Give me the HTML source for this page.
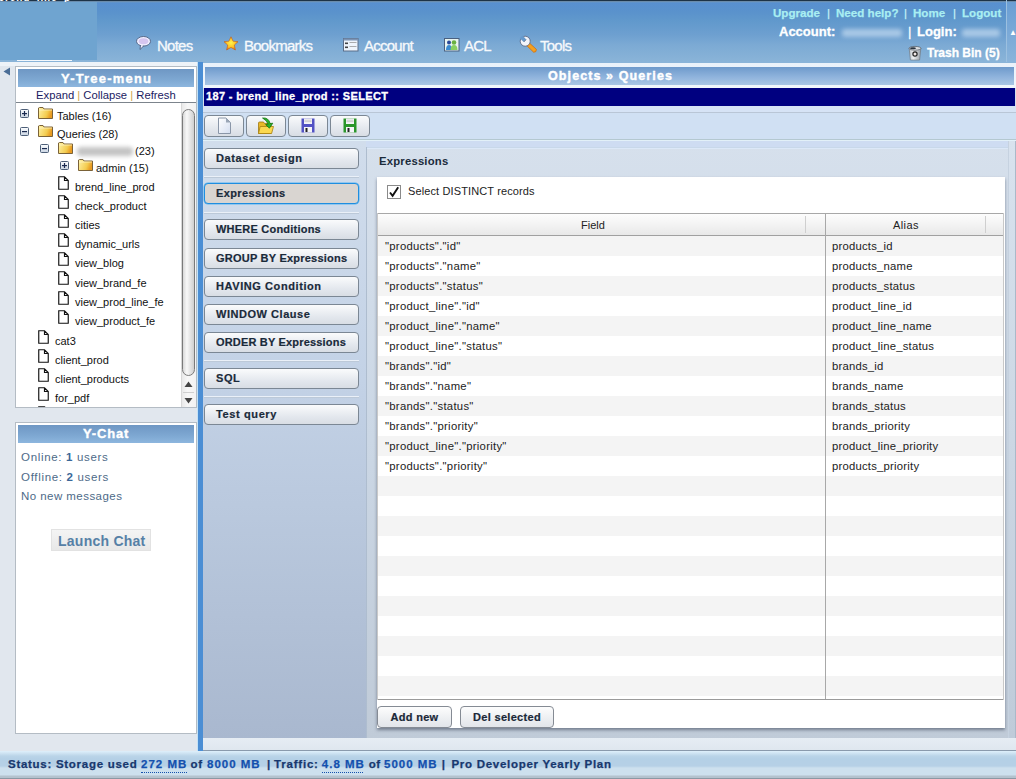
<!DOCTYPE html>
<html><head><meta charset="utf-8">
<style>
*{margin:0;padding:0;box-sizing:border-box}
html,body{width:1016px;height:779px;overflow:hidden;background:#dfe6ee;font-family:"Liberation Sans",sans-serif;position:relative}
.a{position:absolute}
.t{position:absolute;white-space:nowrap;line-height:1}
#hdr{left:0;top:0;width:1016px;height:63px;background:linear-gradient(#7a9cb8 1px,#5890d0 3px,#5a92cc 12px,#6098cc 20px,#6ea0d0 35px,#7caad4 45px,#8ab4d8 62px)}
#hdrtop{left:0;top:0;width:1016px;height:1px;background:#1d3048}
#logo{left:0;top:1px;width:97px;height:59px;background:#6fa4d0}
.nav{color:#f6f9fc;font-size:15px;top:38px;letter-spacing:-0.75px;-webkit-text-stroke:0.3px #f6f9fc}
.toplinks{color:#a9eef2;font-weight:bold;font-size:11.6px;top:6.5px;-webkit-text-stroke:0.25px #a9eef2}
.wb{color:#fff;font-weight:bold;-webkit-text-stroke:0.3px #fff}
#lcol{left:0;top:63px;width:198px;height:688px;background:#e2e8ef}
.box{background:#fff;border:1px solid #b4bcc4}
.boxhdr{background:linear-gradient(#6e97c4,#7ea8d2 60%,#8db6de);color:#fff;font-weight:bold;text-align:center}
#bluebar{left:198px;top:62px;width:5px;height:689px;background:#4b8ed4;box-shadow:-1px 0 0 #c4e2f6,1px 0 0 #c6dcf0}
#rpanel{left:203px;top:62px;width:813px;height:689px;background:#ccdaeb}
#status{left:0;top:751px;width:1016px;height:28px;background:linear-gradient(#dff0fb 0px,#bad4e8 5px,#b4d0e6 8px,#b6d0e6 15px,#cde0ee 17px,#cde0ee 24px,#b4c2ce 25px,#b4c2ce 27px,#8a98a4 27px)}
.tree{font-size:11px;color:#111}
.st{font-weight:bold;font-size:11.5px;-webkit-text-stroke:0.25px currentColor}
.chat{font-size:11.5px;color:#4d6a88;letter-spacing:0.45px}
.chat b{color:#3b6798}
.fold{width:15px;height:11px;background:linear-gradient(135deg,#fff6b0,#e8b020);border:1px solid #b08820;border-radius:1px}
.file{width:11px;height:14px;border:1px solid #222;background:#fff}
.pm{width:9px;height:9px;border:1px solid #6a7f95;background:linear-gradient(#fff,#dde4ec)}
.tab{-webkit-text-stroke:0.2px #1a2a3a;left:204px;width:155px;height:21px;border:1px solid #7b8794;border-radius:4px;background:linear-gradient(#fafbfc,#e4e8ee 60%,#d8dde4);font-weight:bold;font-size:11px;color:#1a2a3a;padding-left:11px;line-height:19px}
.tbtn{top:115px;width:40px;height:22px;border:1px solid #7b8794;border-radius:4px;background:linear-gradient(#fafbfc,#e4e8ee 60%,#d8dde4)}
.row{left:378px;width:626px;height:20px}
.cell{font-size:11.3px;color:#222}
.tab.sel{border:1px solid #1f8ee0;background:#d9d5d1;box-shadow:0 0 0 0.5px #5ab4f0}
.btn{-webkit-text-stroke:0.2px #1a2838;border:1px solid #858b94;border-radius:4px;background:linear-gradient(#fdfdfd,#eceef1 60%,#e2e5ea);font-weight:bold;font-size:11px;color:#1a2838;text-align:center;line-height:20px;letter-spacing:0.3px}
</style></head><body>
<div id="hdr" class="a"></div>

<div id="logo" class="a"></div>
<div class="a" style="left:0;top:0;width:1016px;height:2px;overflow:hidden;background:linear-gradient(#1d3347 1px,#6a8cac 1px)"><div class="t" style="left:-2px;top:-7.5px;color:#fff;font-size:10px;font-weight:bold;letter-spacing:0.9px">brend_line_p</div></div>
<div class="a" style="left:1006px;top:0;width:1px;height:62px;background:#9cc0e0"></div>
<div class="a" style="left:1007px;top:2px;width:9px;height:60px;background:linear-gradient(#6a9ed4,#8ab4da)"></div>
<div class="t" style="left:1009px;top:29px;color:#fff;font-size:8px">&#9650;</div>
<div class="a" style="left:17px;top:60px;width:55px;height:1px;background:#f4f8fc"></div>
<!-- nav icons -->
<svg class="a" style="left:136px;top:36px" width="16" height="15" viewBox="0 0 16 15">
 <ellipse cx="7.5" cy="5.3" rx="7" ry="4.8" fill="#f0eeff" stroke="#4d5f80" stroke-width="0.9"/>
 <path d="M4.5 9 L4 13.5 L8 9.6" fill="#f0eeff" stroke="#4d5f80" stroke-width="0.9"/>
 <ellipse cx="7.5" cy="5.3" rx="4.8" ry="3" fill="#d6c6f0"/>
</svg>
<div class="t nav" style="left:157px">Notes</div>
<svg class="a" style="left:223px;top:36px" width="16" height="15" viewBox="0 0 16 15">
 <defs><radialGradient id="sg" cx="50%" cy="45%" r="60%"><stop offset="0" stop-color="#fff650"/><stop offset="0.6" stop-color="#ffc020"/><stop offset="1" stop-color="#e06010"/></radialGradient></defs>
 <path d="M8 0.8 L10.1 5.2 L15 5.7 L11.3 9 L12.4 14 L8 11.4 L3.6 14 L4.7 9 L1 5.7 L5.9 5.2 Z" fill="url(#sg)" stroke="#c85a10" stroke-width="0.6"/>
</svg>
<div class="t nav" style="left:244px">Bookmarks</div>
<svg class="a" style="left:343px;top:38px" width="16" height="14" viewBox="0 0 16 14">
 <rect x="0.5" y="0.5" width="14.5" height="12.5" fill="#eef4fc" stroke="#5b6e8a"/>
 <rect x="0.5" y="0.5" width="14.5" height="2" fill="#7d94b4"/>
 <rect x="2" y="4.5" width="3" height="1.6" fill="#444"/><rect x="6.5" y="4" width="7" height="0.8" fill="#999"/>
 <rect x="2" y="8.5" width="3" height="1.6" fill="#444"/><rect x="6.5" y="8" width="7" height="0.8" fill="#999"/>
</svg>
<div class="t nav" style="left:364px">Account</div>
<svg class="a" style="left:444px;top:38px" width="16" height="14" viewBox="0 0 16 14">
 <rect x="0.5" y="0.5" width="14.5" height="12.5" fill="#e8f4f0" stroke="#4a6080"/>
 <circle cx="5" cy="4.5" r="2" fill="#2a4a9a"/><path d="M2 12 Q2 7 5 7 Q8 7 8 12Z" fill="#3a8ad0"/>
 <circle cx="10" cy="4.5" r="2.3" fill="#6ab040"/><path d="M6.5 12 Q6.5 7 10 7 Q13.5 7 13.5 12Z" fill="#8ad060"/>
</svg>
<div class="t nav" style="left:464px">ACL</div>
<svg class="a" style="left:519px;top:35px" width="18" height="18" viewBox="0 0 18 18">
 <path d="M10.2 7.8 L17.4 14.4 Q17.6 17.4 14.6 17.2 L7.6 10.4 Z" fill="#f5a020" stroke="#c8680c" stroke-width="0.7"/>
 <circle cx="6.2" cy="6.2" r="5" fill="#f2f4fa" stroke="#55607a" stroke-width="0.8"/>
 <path d="M0.6 3.2 L3.6 0.4 L7.2 4.6 L4.8 7 Z" fill="#6699cc"/>
 <path d="M4.8 7 L7.2 4.6" stroke="#55607a" stroke-width="0.7"/>
</svg>
<div class="t nav" style="left:540px">Tools</div>
<!-- top links -->
<div class="t toplinks" style="left:773px">Upgrade</div>
<div class="t toplinks" style="left:827px;font-weight:normal;color:#d8f0f8">|</div>
<div class="t toplinks" style="left:836px">Need help?</div>
<div class="t toplinks" style="left:904px;font-weight:normal;color:#d8f0f8">|</div>
<div class="t toplinks" style="left:913px">Home</div>
<div class="t toplinks" style="left:953px;font-weight:normal;color:#d8f0f8">|</div>
<div class="t toplinks" style="left:962px">Logout</div>
<div class="t wb" style="left:779px;top:25px;font-size:13px">Account:</div>
<div class="a" style="left:842px;top:29px;width:60px;height:8px;background:#a8c8e6;filter:blur(2px);border-radius:3px"></div>
<div class="t wb" style="left:908px;top:25px;font-size:13px;font-weight:normal">|</div>
<div class="t wb" style="left:917px;top:25px;font-size:13px">Login:</div>
<div class="a" style="left:962px;top:29px;width:38px;height:8px;background:#a8c8e6;filter:blur(2px);border-radius:3px"></div>
<svg class="a" style="left:908px;top:45px" width="14" height="16" viewBox="0 0 14 16">
 <defs><linearGradient id="tg" x1="0" y1="0" x2="1" y2="0"><stop offset="0" stop-color="#b8c0c8"/><stop offset="0.35" stop-color="#eef0f2"/><stop offset="1" stop-color="#9aa2aa"/></linearGradient></defs>
 <path d="M1.2 3.5 L12.8 3.5 L11.6 15 L2.4 15 Z" fill="url(#tg)" stroke="#6a727a" stroke-width="0.6"/>
 <ellipse cx="7" cy="3.3" rx="6" ry="1.9" fill="#d8dce0" stroke="#505860" stroke-width="0.7"/>
 <ellipse cx="5" cy="3.3" rx="3" ry="1" fill="#2a3440"/>
 <circle cx="7" cy="9" r="2.1" fill="#f0e8e8" stroke="#222" stroke-width="1.2"/>
</svg>
<div class="t wb" style="left:927px;top:46.5px;font-size:12px">Trash Bin (5)</div>

<div class="a" style="left:0;top:62px;width:198px;height:689px;background:#e1e7ee"></div>
<div class="a" style="left:0;top:62px;width:198px;height:4px;background:#eef3f8"></div>
<svg class="a" style="left:3px;top:67px" width="8" height="9" viewBox="0 0 8 9"><path d="M7 0.5 L7 8.5 L0.5 4.5Z" fill="#4a6d96"/></svg>
<div class="a box" style="left:15px;top:66px;width:182px;height:342px"></div>
<div class="a boxhdr" style="left:18px;top:69px;width:176px;height:18px"></div>
<div class="t" style="left:61px;top:71.5px;color:#fff;font-weight:bold;font-size:13px;letter-spacing:1.2px;-webkit-text-stroke:0.35px #fff">Y-Tree-menu</div>
<div class="t" style="left:36px;top:90px;font-size:11.25px;color:#1a1a62">Expand <span style="color:#d0a850">|</span> Collapse <span style="color:#d0a850">|</span> Refresh</div>
<div class="a" style="left:16px;top:102px;width:180px;height:1px;background:#7c848c"></div>
<div class="a" style="left:181px;top:103px;width:15px;height:304px;background:linear-gradient(90deg,#e9e9e9,#f7f7f7 40%,#f2f2f2);border-left:1px solid #d8d8d8"></div>
<div class="a" style="left:182px;top:109px;width:13px;height:267px;border:1px solid #7a7a7a;border-radius:7px;background:linear-gradient(90deg,#d8d8d8,#f8f8f8 35%,#e8e8e8 60%,#cfcfcf)"></div>
<svg class="a" style="left:183px;top:381px" width="11" height="24" viewBox="0 0 11 24"><path d="M5.5 0.5 L9.5 6 L1.5 6Z" fill="#444"/><rect x="0" y="11" width="11" height="1" fill="#cfcfcf"/><path d="M1.5 17 L9.5 17 L5.5 22.5Z" fill="#444"/></svg>
<svg width="0" height="0" style="position:absolute"><defs><linearGradient id="pmg" x1="0" y1="0" x2="0" y2="1"><stop offset="0" stop-color="#fdfeff"/><stop offset="1" stop-color="#c9d4e2"/></linearGradient><linearGradient id="fg" x1="0" y1="0" x2="1" y2="0.3"><stop offset="0" stop-color="#fff3a8"/><stop offset="0.7" stop-color="#f3cc50"/><stop offset="1" stop-color="#e89a20"/></linearGradient></defs></svg>
<div class="a" style="overflow:hidden;left:16px;top:103px;width:165px;height:304px">
<svg class="a" style="left:4px;top:6px" width="9" height="9" viewBox="0 0 9 9"><rect x="0.5" y="0.5" width="8" height="8" rx="1" fill="url(#pmg)" stroke="#4d5f78"/><rect x="2" y="4" width="5" height="1.2" fill="#1a2a50"/><rect x="3.9" y="2" width="1.2" height="5" fill="#1a2a50"/></svg>
<svg class="a" style="left:22px;top:4px" width="15" height="12" viewBox="0 0 15 12"><path d="M0.5 11.5 L0.5 1 L1.5 0.5 L5 0.5 L6 2 L14.5 2 L14.5 11.5Z" fill="url(#fg)" stroke="#7a6238" stroke-width="1"/><rect x="1" y="2.5" width="13" height="1" fill="#fff8d0" opacity="0.7"/></svg>
<div class="t tree" style="left:41px;top:8.4px">Tables (16)</div>
<svg class="a" style="left:4px;top:24px" width="9" height="9" viewBox="0 0 9 9"><rect x="0.5" y="0.5" width="8" height="8" rx="1" fill="url(#pmg)" stroke="#4d5f78"/><rect x="2" y="4" width="5" height="1.2" fill="#1a2a50"/></svg>
<svg class="a" style="left:22px;top:22px" width="15" height="12" viewBox="0 0 15 12"><path d="M0.5 11.5 L0.5 1 L1.5 0.5 L5 0.5 L6 2 L14.5 2 L14.5 11.5Z" fill="url(#fg)" stroke="#7a6238" stroke-width="1"/><rect x="1" y="2.5" width="13" height="1" fill="#fff8d0" opacity="0.7"/></svg>
<div class="t tree" style="left:41px;top:25.8px">Queries (28)</div>
<svg class="a" style="left:24px;top:41px" width="9" height="9" viewBox="0 0 9 9"><rect x="0.5" y="0.5" width="8" height="8" rx="1" fill="url(#pmg)" stroke="#4d5f78"/><rect x="2" y="4" width="5" height="1.2" fill="#1a2a50"/></svg>
<svg class="a" style="left:42px;top:39px" width="15" height="12" viewBox="0 0 15 12"><path d="M0.5 11.5 L0.5 1 L1.5 0.5 L5 0.5 L6 2 L14.5 2 L14.5 11.5Z" fill="url(#fg)" stroke="#7a6238" stroke-width="1"/><rect x="1" y="2.5" width="13" height="1" fill="#fff8d0" opacity="0.7"/></svg>
<div class="t tree" style="left:119px;top:42.8px">(23)</div>
<svg class="a" style="left:44px;top:58px" width="9" height="9" viewBox="0 0 9 9"><rect x="0.5" y="0.5" width="8" height="8" rx="1" fill="url(#pmg)" stroke="#4d5f78"/><rect x="2" y="4" width="5" height="1.2" fill="#1a2a50"/><rect x="3.9" y="2" width="1.2" height="5" fill="#1a2a50"/></svg>
<svg class="a" style="left:62px;top:56px" width="15" height="12" viewBox="0 0 15 12"><path d="M0.5 11.5 L0.5 1 L1.5 0.5 L5 0.5 L6 2 L14.5 2 L14.5 11.5Z" fill="url(#fg)" stroke="#7a6238" stroke-width="1"/><rect x="1" y="2.5" width="13" height="1" fill="#fff8d0" opacity="0.7"/></svg>
<div class="t tree" style="left:80px;top:60.4px">admin (15)</div>
<div class="a" style="left:61px;top:44px;width:56px;height:9px;background:#c4c4c4;filter:blur(2.2px);border-radius:4px"></div>
<svg class="a" style="left:42px;top:73px" width="11" height="14" viewBox="0 0 11 14"><path d="M0.75 0.75 L6.5 0.75 L10.25 4.5 L10.25 13.25 L0.75 13.25Z M6.5 0.75 L6.5 4.5 L10.25 4.5" fill="#fff" stroke="#111" stroke-width="1.15"/></svg>
<div class="t tree" style="left:59px;top:79.0px">brend_line_prod</div>
<svg class="a" style="left:42px;top:92px" width="11" height="14" viewBox="0 0 11 14"><path d="M0.75 0.75 L6.5 0.75 L10.25 4.5 L10.25 13.25 L0.75 13.25Z M6.5 0.75 L6.5 4.5 L10.25 4.5" fill="#fff" stroke="#111" stroke-width="1.15"/></svg>
<div class="t tree" style="left:59px;top:98.1px">check_product</div>
<svg class="a" style="left:42px;top:111px" width="11" height="14" viewBox="0 0 11 14"><path d="M0.75 0.75 L6.5 0.75 L10.25 4.5 L10.25 13.25 L0.75 13.25Z M6.5 0.75 L6.5 4.5 L10.25 4.5" fill="#fff" stroke="#111" stroke-width="1.15"/></svg>
<div class="t tree" style="left:59px;top:117.2px">cities</div>
<svg class="a" style="left:42px;top:130px" width="11" height="14" viewBox="0 0 11 14"><path d="M0.75 0.75 L6.5 0.75 L10.25 4.5 L10.25 13.25 L0.75 13.25Z M6.5 0.75 L6.5 4.5 L10.25 4.5" fill="#fff" stroke="#111" stroke-width="1.15"/></svg>
<div class="t tree" style="left:59px;top:136.3px">dynamic_urls</div>
<svg class="a" style="left:42px;top:149px" width="11" height="14" viewBox="0 0 11 14"><path d="M0.75 0.75 L6.5 0.75 L10.25 4.5 L10.25 13.25 L0.75 13.25Z M6.5 0.75 L6.5 4.5 L10.25 4.5" fill="#fff" stroke="#111" stroke-width="1.15"/></svg>
<div class="t tree" style="left:59px;top:155.4px">view_blog</div>
<svg class="a" style="left:42px;top:168px" width="11" height="14" viewBox="0 0 11 14"><path d="M0.75 0.75 L6.5 0.75 L10.25 4.5 L10.25 13.25 L0.75 13.25Z M6.5 0.75 L6.5 4.5 L10.25 4.5" fill="#fff" stroke="#111" stroke-width="1.15"/></svg>
<div class="t tree" style="left:59px;top:174.5px">view_brand_fe</div>
<svg class="a" style="left:42px;top:188px" width="11" height="14" viewBox="0 0 11 14"><path d="M0.75 0.75 L6.5 0.75 L10.25 4.5 L10.25 13.25 L0.75 13.25Z M6.5 0.75 L6.5 4.5 L10.25 4.5" fill="#fff" stroke="#111" stroke-width="1.15"/></svg>
<div class="t tree" style="left:59px;top:193.6px">view_prod_line_fe</div>
<svg class="a" style="left:42px;top:207px" width="11" height="14" viewBox="0 0 11 14"><path d="M0.75 0.75 L6.5 0.75 L10.25 4.5 L10.25 13.25 L0.75 13.25Z M6.5 0.75 L6.5 4.5 L10.25 4.5" fill="#fff" stroke="#111" stroke-width="1.15"/></svg>
<div class="t tree" style="left:59px;top:212.7px">view_product_fe</div>
<svg class="a" style="left:22px;top:227px" width="11" height="14" viewBox="0 0 11 14"><path d="M0.75 0.75 L6.5 0.75 L10.25 4.5 L10.25 13.25 L0.75 13.25Z M6.5 0.75 L6.5 4.5 L10.25 4.5" fill="#fff" stroke="#111" stroke-width="1.15"/></svg>
<div class="t tree" style="left:39px;top:233.0px">cat3</div>
<svg class="a" style="left:22px;top:246px" width="11" height="14" viewBox="0 0 11 14"><path d="M0.75 0.75 L6.5 0.75 L10.25 4.5 L10.25 13.25 L0.75 13.25Z M6.5 0.75 L6.5 4.5 L10.25 4.5" fill="#fff" stroke="#111" stroke-width="1.15"/></svg>
<div class="t tree" style="left:39px;top:251.9px">client_prod</div>
<svg class="a" style="left:22px;top:265px" width="11" height="14" viewBox="0 0 11 14"><path d="M0.75 0.75 L6.5 0.75 L10.25 4.5 L10.25 13.25 L0.75 13.25Z M6.5 0.75 L6.5 4.5 L10.25 4.5" fill="#fff" stroke="#111" stroke-width="1.15"/></svg>
<div class="t tree" style="left:39px;top:270.8px">client_products</div>
<svg class="a" style="left:22px;top:284px" width="11" height="14" viewBox="0 0 11 14"><path d="M0.75 0.75 L6.5 0.75 L10.25 4.5 L10.25 13.25 L0.75 13.25Z M6.5 0.75 L6.5 4.5 L10.25 4.5" fill="#fff" stroke="#111" stroke-width="1.15"/></svg>
<div class="t tree" style="left:39px;top:289.7px">for_pdf</div>
<svg class="a" style="left:22px;top:303px" width="11" height="14" viewBox="0 0 11 14"><path d="M0.75 0.75 L6.5 0.75 L10.25 4.5 L10.25 13.25 L0.75 13.25Z M6.5 0.75 L6.5 4.5 L10.25 4.5" fill="#fff" stroke="#111" stroke-width="1.15"/></svg>
</div>
<div class="a box" style="left:15px;top:422px;width:182px;height:312px"></div>
<div class="a boxhdr" style="left:18px;top:425px;width:176px;height:18px"></div>
<div class="t" style="left:83px;top:427px;color:#fff;font-weight:bold;font-size:13px;letter-spacing:0.85px;-webkit-text-stroke:0.35px #fff">Y-Chat</div>
<div class="t chat" style="left:21px;top:451.5px;letter-spacing:0.68px">Online: <b>1</b> users</div>
<div class="t chat" style="left:21px;top:471.5px;letter-spacing:0.68px">Offline: <b>2</b> users</div>
<div class="t chat" style="left:21px;top:491px">No new messages</div>
<div class="a" style="left:51px;top:529px;width:100px;height:22px;background:linear-gradient(#f4f4f4,#e8e8e8);border:1px solid #e2e2e2"></div>
<div class="t" style="left:58px;top:534px;color:#5680a6;font-weight:bold;font-size:14px;letter-spacing:0.25px">Launch Chat</div>
<div id="bluebar" class="a"></div>
<div class="a" style="left:203px;top:62px;width:813px;height:689px;background:#d3dfec"></div>
<div class="a" style="left:203px;top:62px;width:813px;height:1px;background:#8ab4d8"></div>
<div class="a" style="left:203px;top:63px;width:813px;height:25px;background:linear-gradient(#eaf2fa,#f0f6fb)"></div>
<div class="a" style="left:205px;top:67px;width:809px;height:18px;background:linear-gradient(#6e9acb,#8fb3dc 55%,#a9c6e4)"></div>
<div class="t" style="left:548px;top:70px;color:#fff;font-weight:bold;font-size:12.5px;letter-spacing:1.1px;-webkit-text-stroke:0.4px #fff">Objects &raquo; Queries</div>
<div class="a" style="left:204px;top:88px;width:811px;height:18px;background:#000080"></div>
<div class="t" style="left:206px;top:91px;color:#fff;font-weight:bold;font-size:11px;letter-spacing:0.36px;-webkit-text-stroke:0.3px #fff">187 - brend_line_prod :: SELECT</div>
<div class="a" style="left:203px;top:106px;width:813px;height:6px;background:#d6e3f5"></div>
<div class="a" style="left:203px;top:112px;width:813px;height:1px;background:#b9c6d6"></div>
<div class="a" style="left:203px;top:113px;width:813px;height:27px;background:#d0e0f3"></div>
<div class="a" style="left:203px;top:139px;width:813px;height:1px;background:#b4c8d0"></div><div class="a" style="left:203px;top:140px;width:813px;height:1px;background:#e2f0f8"></div>
<div class="a" style="left:203px;top:141px;width:163px;height:597px;background:linear-gradient(#d1ddec,#c3d2e6 40%,#a9b8cf)"></div>
<div class="a" style="left:366px;top:141px;width:650px;height:597px;background:linear-gradient(#d6e0ec,#cbd7e5 50%,#c0cbd8)"></div>
<div class="a" style="left:366px;top:141px;width:642px;height:6px;background:#cedcf2"></div>
<div class="a" style="left:366px;top:147px;width:650px;height:1px;background:#c8d8ea"></div><div class="a" style="left:366px;top:148px;width:650px;height:1px;background:#dce8f8"></div>
<div class="a" style="left:366px;top:147px;width:1px;height:591px;background:#aebdcf"></div>
<div class="a" style="left:203px;top:738px;width:813px;height:12px;background:linear-gradient(#e6edf4,#dfe7ef)"></div>
<div class="a" style="left:203px;top:750px;width:813px;height:1px;background:#8a9aac"></div>
<div class="a tbtn" style="left:204px"></div>
<div class="a tbtn" style="left:246px"></div>
<div class="a tbtn" style="left:288px"></div>
<div class="a tbtn" style="left:330px"></div>
<svg class="a" style="left:217px;top:117px" width="15" height="18" viewBox="0 0 15 18"><path d="M1.5 1 L9 1 L13.5 5.5 L13.5 16.5 L1.5 16.5Z" fill="url(#docg)" stroke="#8a96a8" stroke-width="1"/><path d="M9 1 L9 5.5 L13.5 5.5Z" fill="#9aa6b6"/></svg>
<svg class="a" style="left:257px;top:117px" width="18" height="18" viewBox="0 0 18 18"><path d="M1.5 16.5 L1.5 6 Q1.5 5 2.5 5 L6.5 5 L7.5 6.5 L14 6.5 L14 16.5 Z" fill="#eab828" stroke="#a07810" stroke-width="0.8"/><path d="M1.5 16.5 L3.2 9.5 L16.5 9.5 L14.6 16.5 Z" fill="#fbd850" stroke="#a88010" stroke-width="0.8"/><path d="M5.5 1 Q11.5 0.2 13.2 6.6 L15.8 6.2 L12.4 11.2 L8.6 7.6 L11.2 7.2 Q9.6 3.2 5.5 1 Z" fill="#2cb02c" stroke="#0a6a0a" stroke-width="0.7"/></svg>
<svg class="a" style="left:301px;top:118px" width="14" height="15" viewBox="0 0 14 15"><path d="M0.5 0.5 L13.5 0.5 L13.5 14.5 L0.5 14.5Z" fill="#5252c4"/><rect x="3" y="0.5" width="8" height="5.5" fill="#f4f4f8"/><rect x="3.5" y="1.8" width="7" height="0.7" fill="#bbb"/><rect x="3.5" y="3.4" width="7" height="0.7" fill="#bbb"/><rect x="3" y="9" width="8" height="5.5" fill="#f4f4f8"/><rect x="4.5" y="10" width="2" height="4" fill="#222"/></svg>
<svg class="a" style="left:343px;top:118px" width="14" height="15" viewBox="0 0 14 15"><path d="M0.5 0.5 L13.5 0.5 L13.5 14.5 L0.5 14.5Z" fill="#2a962a"/><rect x="3" y="0.5" width="8" height="5.5" fill="#f4f4f8"/><rect x="3.5" y="1.8" width="7" height="0.7" fill="#bbb"/><rect x="3.5" y="3.4" width="7" height="0.7" fill="#bbb"/><rect x="3" y="9" width="8" height="5.5" fill="#f4f4f8"/><rect x="4.5" y="10" width="2" height="4" fill="#222"/></svg>
<div class="a tab" style="top:148px;letter-spacing:0.6px">Dataset design</div>
<div class="a tab sel" style="top:183px;letter-spacing:0.38px">Expressions</div>
<div class="a tab" style="top:219px;letter-spacing:0.22px">WHERE Conditions</div>
<div class="a tab" style="top:248px;letter-spacing:0.23px">GROUP BY Expressions</div>
<div class="a tab" style="top:276px;letter-spacing:0.58px">HAVING Condition</div>
<div class="a tab" style="top:304px;letter-spacing:0.54px">WINDOW Clause</div>
<div class="a tab" style="top:332px;letter-spacing:0.18px">ORDER BY Expressions</div>
<div class="a tab" style="top:368px;letter-spacing:0.6px">SQL</div>
<div class="a tab" style="top:404px;letter-spacing:0.62px">Test query</div>
<div class="a" style="left:204px;top:176px;width:155px;height:1px;background:#eaf0f8"></div>
<div class="a" style="left:204px;top:177px;width:155px;height:1px;background:#bcc9d8"></div>
<div class="a" style="left:204px;top:212px;width:155px;height:1px;background:#eaf0f8"></div>
<div class="a" style="left:204px;top:213px;width:155px;height:1px;background:#bcc9d8"></div>
<div class="a" style="left:204px;top:360px;width:155px;height:1px;background:#eaf0f8"></div>
<div class="a" style="left:204px;top:361px;width:155px;height:1px;background:#bcc9d8"></div>
<div class="a" style="left:204px;top:396px;width:155px;height:1px;background:#eaf0f8"></div>
<div class="a" style="left:204px;top:397px;width:155px;height:1px;background:#bcc9d8"></div>
<div class="t" style="left:379px;top:156px;font-weight:bold;font-size:11.3px;color:#1b2b3b;letter-spacing:0.2px">Expressions</div>
<div class="a" style="left:1008px;top:141px;width:7px;height:597px;background:linear-gradient(#d8e2ee,#ccd7e4 50%,#bfcbd9);border-left:1px solid #c6d2e0"></div><div class="a" style="left:1015px;top:141px;width:1px;height:597px;background:#a9b9c9"></div>
<div class="a" style="left:377px;top:177px;width:628px;height:551px;background:#fff;box-shadow:0px 2px 3px rgba(40,50,70,0.5)"></div>
<svg class="a" style="left:387px;top:185px" width="14" height="14" viewBox="0 0 14 14"><rect x="0.5" y="0.5" width="13" height="13" fill="#fff" stroke="#8a8a8a"/><path d="M3 7.5 L5.6 10.8 L11.2 2.2" fill="none" stroke="#111" stroke-width="1.9"/></svg>
<div class="t" style="left:408px;top:186px;font-size:11px;color:#222;letter-spacing:0.12px">Select DISTINCT records</div>
<div class="a" style="left:377px;top:213px;width:627px;height:1px;background:#a8a8a8"></div>
<div class="a" style="left:378px;top:214px;width:625px;height:21px;background:linear-gradient(#fdfdfd,#f1f1f1 60%,#e8e8e8)"></div>
<div class="a" style="left:377px;top:235px;width:627px;height:1px;background:#a0a0a0"></div>
<div class="a" style="left:805px;top:216px;width:1px;height:17px;background:#cfcfcf"></div>
<div class="a" style="left:985px;top:216px;width:1px;height:17px;background:#cfcfcf"></div>
<div class="t" style="left:581px;top:220px;font-size:11px;color:#222">Field</div>
<div class="t" style="left:893px;top:220px;font-size:11px;color:#222;letter-spacing:0.4px">Alias</div>
<div class="a" style="left:378px;top:236px;width:625px;height:20px;background:#f4f4f4"></div>
<div class="a" style="left:378px;top:276px;width:625px;height:20px;background:#f4f4f4"></div>
<div class="a" style="left:378px;top:316px;width:625px;height:20px;background:#f4f4f4"></div>
<div class="a" style="left:378px;top:356px;width:625px;height:20px;background:#f4f4f4"></div>
<div class="a" style="left:378px;top:396px;width:625px;height:20px;background:#f4f4f4"></div>
<div class="a" style="left:378px;top:436px;width:625px;height:20px;background:#f4f4f4"></div>
<div class="a" style="left:378px;top:476px;width:625px;height:20px;background:#f4f4f4"></div>
<div class="a" style="left:378px;top:516px;width:625px;height:20px;background:#f4f4f4"></div>
<div class="a" style="left:378px;top:556px;width:625px;height:20px;background:#f4f4f4"></div>
<div class="a" style="left:378px;top:596px;width:625px;height:20px;background:#f4f4f4"></div>
<div class="a" style="left:378px;top:636px;width:625px;height:20px;background:#f4f4f4"></div>
<div class="a" style="left:378px;top:676px;width:625px;height:20px;background:#f4f4f4"></div>
<div class="a" style="left:378px;top:696px;width:625px;height:3px;background:#fff"></div>
<div class="a" style="left:377px;top:699px;width:627px;height:1px;background:#9a9a9a"></div>
<div class="a" style="left:825px;top:214px;width:1px;height:485px;background:#a8a8a8"></div>
<div class="a" style="left:377px;top:213px;width:1px;height:487px;background:#c8c8c8"></div>
<div class="a" style="left:1003px;top:213px;width:1px;height:487px;background:#c8c8c8"></div>
<div class="t cell" style="left:385px;top:241px;letter-spacing:0.28px">"products"."id"</div>
<div class="t cell" style="left:832px;top:241px;letter-spacing:0.22px">products_id</div>
<div class="t cell" style="left:385px;top:261px;letter-spacing:0.28px">"products"."name"</div>
<div class="t cell" style="left:832px;top:261px;letter-spacing:0.22px">products_name</div>
<div class="t cell" style="left:385px;top:281px;letter-spacing:0.28px">"products"."status"</div>
<div class="t cell" style="left:832px;top:281px;letter-spacing:0.22px">products_status</div>
<div class="t cell" style="left:385px;top:301px;letter-spacing:0.28px">"product_line"."id"</div>
<div class="t cell" style="left:832px;top:301px;letter-spacing:0.22px">product_line_id</div>
<div class="t cell" style="left:385px;top:321px;letter-spacing:0.28px">"product_line"."name"</div>
<div class="t cell" style="left:832px;top:321px;letter-spacing:0.22px">product_line_name</div>
<div class="t cell" style="left:385px;top:341px;letter-spacing:0.28px">"product_line"."status"</div>
<div class="t cell" style="left:832px;top:341px;letter-spacing:0.22px">product_line_status</div>
<div class="t cell" style="left:385px;top:361px;letter-spacing:0.28px">"brands"."id"</div>
<div class="t cell" style="left:832px;top:361px;letter-spacing:0.22px">brands_id</div>
<div class="t cell" style="left:385px;top:381px;letter-spacing:0.28px">"brands"."name"</div>
<div class="t cell" style="left:832px;top:381px;letter-spacing:0.22px">brands_name</div>
<div class="t cell" style="left:385px;top:401px;letter-spacing:0.28px">"brands"."status"</div>
<div class="t cell" style="left:832px;top:401px;letter-spacing:0.22px">brands_status</div>
<div class="t cell" style="left:385px;top:421px;letter-spacing:0.28px">"brands"."priority"</div>
<div class="t cell" style="left:832px;top:421px;letter-spacing:0.22px">brands_priority</div>
<div class="t cell" style="left:385px;top:441px;letter-spacing:0.28px">"product_line"."priority"</div>
<div class="t cell" style="left:832px;top:441px;letter-spacing:0.22px">product_line_priority</div>
<div class="t cell" style="left:385px;top:461px;letter-spacing:0.28px">"products"."priority"</div>
<div class="t cell" style="left:832px;top:461px;letter-spacing:0.22px">products_priority</div>
<div class="a btn" style="left:377px;top:706px;width:75px;height:22px">Add new</div>
<div class="a btn" style="left:460px;top:706px;width:94px;height:22px">Del selected</div>
<svg width="0" height="0" style="position:absolute"><defs><linearGradient id="docg" x1="0" y1="0" x2="1" y2="1"><stop offset="0" stop-color="#ffffff"/><stop offset="1" stop-color="#d4def0"/></linearGradient></defs></svg>
<div id="status" class="a"></div>

<div class="t st" style="left:8px;top:759px;color:#18386e;letter-spacing:0.72px">Status: Storage used</div>
<div class="t st" style="left:141px;top:759px;color:#1450ae;letter-spacing:1.0px">272 MB</div>
<div class="a" style="left:141px;top:772px;width:46px;height:0;border-top:1px dotted #1450ae"></div>
<div class="t st" style="left:190.6px;top:759px;color:#18386e;letter-spacing:0.6px">of</div>
<div class="t st" style="left:207px;top:759px;color:#1450ae;letter-spacing:1.0px">8000 MB</div>
<div class="t st" style="left:267px;top:759px;color:#18386e">|</div>
<div class="t st" style="left:274px;top:759px;color:#18386e;letter-spacing:0.8px">Traffic:</div>
<div class="t st" style="left:321.8px;top:759px;color:#1450ae;letter-spacing:1.0px">4.8 MB</div>
<div class="a" style="left:321.8px;top:772px;width:41px;height:0;border-top:1px dotted #1450ae"></div>
<div class="t st" style="left:368.7px;top:759px;color:#18386e;letter-spacing:0.6px">of</div>
<div class="t st" style="left:384px;top:759px;color:#1450ae;letter-spacing:1.0px">5000 MB</div>
<div class="t st" style="left:441.8px;top:759px;color:#18386e">|</div>
<div class="t st" style="left:451.4px;top:759px;color:#18386e;letter-spacing:0.72px">Pro Developer Yearly Plan</div>
</body></html>
